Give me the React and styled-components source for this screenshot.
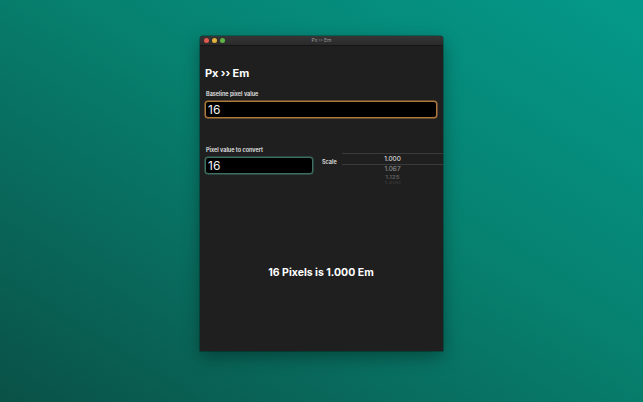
import React from 'react';
import styled, { createGlobalStyle } from 'styled-components';

const GlobalStyle = createGlobalStyle`
  html, body {
    margin: 0;
    padding: 0;
    height: 100%;
  }
  body {
    font-family: Inter, "Noto Sans", sans-serif;
    background: linear-gradient(to top right, #0a5147 0%, #07806f 55%, #04998a 100%);
  }
`;

const Desktop = styled.div`
  width: 100vw;
  height: 100vh;
  display: flex;
  justify-content: center;
  align-items: flex-start;
  padding-top: 36px;
  box-sizing: border-box;
`;

const Window = styled.div`
  width: 243px;
  height: 315px;
  background: #1f1f1f;
  display: flex;
  flex-direction: column;
  box-shadow: 0 6px 18px rgba(0, 0, 0, 0.35), 0 0 0 0.5px rgba(0, 0, 0, 0.5);
  border-radius: 3px 3px 0 0;
  overflow: hidden;
`;

const TitleBar = styled.div`
  height: 9px;
  flex-shrink: 0;
  background: linear-gradient(to bottom, #353535, #2a2a2a);
  border-bottom: 1px solid #151515;
  display: flex;
  align-items: center;
  position: relative;
  padding-left: 4px;
  gap: 3px;
`;

const Light = styled.span`
  width: 5px;
  height: 5px;
  border-radius: 50%;
  background: ${p => p.color};
`;

const WindowTitle = styled.span`
  position: absolute;
  left: 0;
  right: 0;
  text-align: center;
  font-size: 5px;
  color: #9a9a9a;
  line-height: 9px;
`;

const Body = styled.div`
  flex: 1;
  display: flex;
  flex-direction: column;
  padding: 0 6px 0 5px;
`;

const Heading = styled.h1`
  margin: 19px 0 0 0;
  font-size: 11px;
  line-height: 16px;
  font-weight: 700;
  color: #ffffff;
  letter-spacing: -0.1px;
`;

const Label = styled.div`
  margin-top: ${p => p.$top}px;
  padding-left: 1px;
  font-size: 5.5px;
  line-height: 8px;
  font-weight: 600;
  color: #e6e6e6;
`;

const Field = styled.input`
  box-sizing: border-box;
  width: ${p => p.$width};
  height: 17px;
  margin-top: 3px;
  padding: 0 0 0 2px;
  background: #000;
  border: 1px solid ${p => p.$ring};
  box-shadow: 0 0 0 0.5px ${p => p.$ring};
  border-radius: 3px;
  color: #f2f2f2;
  font-family: Inter, "Noto Sans", sans-serif;
  font-size: 12px;
  outline: none;
`;

const Row = styled.div`
  display: flex;
  align-items: flex-start;
  margin-right: -6px;
`;

const ScaleLabel = styled.div`
  margin: 5px 0 0 9px;
  width: 20px;
  font-size: 5.5px;
  font-weight: 600;
  color: #e0e0e0;
`;

const Picker = styled.div`
  flex: 1;
  margin-top: -1px;
  display: flex;
  flex-direction: column;
  align-items: stretch;
`;

const PickerItem = styled.div`
  height: ${p => p.$h}px;
  line-height: ${p => p.$h}px;
  text-align: center;
  font-size: 6.5px;
  color: #ececec;
  opacity: ${p => p.$o};
  transform: scaleY(${p => p.$s});
  border-top: ${p => (p.$sel ? '0.5px solid #3a3a3a' : 'none')};
  border-bottom: ${p => (p.$sel ? '0.5px solid #3a3a3a' : 'none')};
`;

const Result = styled.div`
  margin-top: 80px;
  text-align: center;
  font-size: 10.5px;
  line-height: 14px;
  font-weight: 700;
  color: #ffffff;
`;

const scaleValues = [
  { v: '1.000', h: 10, o: 1, s: 1, sel: true },
  { v: '1.067', h: 9, o: 0.55, s: 0.95 },
  { v: '1.125', h: 7, o: 0.35, s: 0.8 },
  { v: '1.200', h: 5, o: 0.15, s: 0.55 },
];

export default function App() {
  return (
    <>
      <GlobalStyle />
      <Desktop>
        <Window>
          <TitleBar>
            <Light color="#e0584e" />
            <Light color="#e2b23f" />
            <Light color="#5cb548" />
            <WindowTitle>Px ›› Em</WindowTitle>
          </TitleBar>
          <Body>
            <Heading>Px ›› Em</Heading>
            <Label $top={9}>Baseline pixel value</Label>
            <Field $width="100%" $ring="#b07a3c" defaultValue="16" />
            <Label $top={28}>Pixel value to convert</Label>
            <Row>
              <Field $width="108px" $ring="#3d6f63" defaultValue="16" />
              <ScaleLabel>Scale</ScaleLabel>
              <Picker>
                {scaleValues.map(item => (
                  <PickerItem key={item.v} $h={item.h} $o={item.o} $s={item.s} $sel={item.sel}>
                    {item.v}
                  </PickerItem>
                ))}
              </Picker>
            </Row>
            <Result>16 Pixels is 1.000 Em</Result>
          </Body>
        </Window>
      </Desktop>
    </>
  );
}
